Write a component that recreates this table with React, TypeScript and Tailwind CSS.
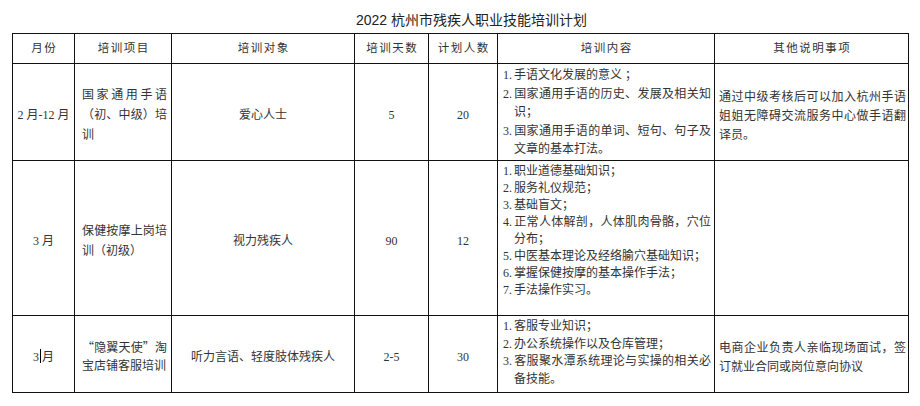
import React from "react";

type Row = {
  month: React.ReactNode;
  project: string;
  projectLeading: string;
  target: string;
  days: string;
  people: string;
  items: string[];
  itemsLeading: string;
  note: string;
  height: string;
};

const rows: Row[] = [
  {
    month: "2 月-12 月",
    project: "国家通用手语（初、中级）培训",
    projectLeading: "leading-[20px]",
    target: "爱心人士",
    days: "5",
    people: "20",
    items: [
      "1.手语文化发展的意义 ；",
      "2.国家通用手语的历史、发展及相关知识；",
      "3.国家通用手语的单词、短句、句子及文章的基本打法。",
    ],
    itemsLeading: "leading-[18.5px]",
    note: "通过中级考核后可以加入杭州手语姐姐无障碍交流服务中心做手语翻译员。",
    height: "h-[97px]",
  },
  {
    month: "3 月",
    project: "保健按摩上岗培训（初级）",
    projectLeading: "leading-[20px]",
    target: "视力残疾人",
    days: "90",
    people: "12",
    items: [
      "1.职业道德基础知识；",
      "2.服务礼仪规范；",
      "3.基础盲文；",
      "4.正常人体解剖，人体肌肉骨骼，穴位分布；",
      "5.中医基本理论及经络腧穴基础知识；",
      "6.掌握保健按摩的基本操作手法；",
      "7.手法操作实习。",
    ],
    itemsLeading: "leading-[17px]",
    note: "",
    height: "h-[155px]",
  },
  {
    month: (
      <>
        3
        <span className="mx-[1px] inline-block h-[14px] w-px bg-black align-[-2px]" />
        月
      </>
    ),
    project: "“隐翼天使”淘宝店铺客服培训",
    projectLeading: "leading-[18px]",
    target: "听力言语、轻度肢体残疾人",
    days: "2-5",
    people: "30",
    items: [
      "1.客服专业知识；",
      "2.办公系统操作以及仓库管理；",
      "3.客服聚水潭系统理论与实操的相关必备技能。",
    ],
    itemsLeading: "leading-[17.5px]",
    note: "电商企业负责人亲临现场面试，签订就业合同或岗位意向协议",
    height: "h-[77px]",
  },
];

const headers = ["月份", "培训项目", "培训对象", "培训天数", "计划人数", "培训内容", "其他说明事项"];

const cell = "border border-[#111] p-0";

function Item({ text }: { text: string }) {
  const dot = text.indexOf(".");
  return (
    <div className="pl-[11px] -indent-[11px] text-justify">
      <span className="mr-[2px]">{text.slice(0, dot + 1)}</span>
      {text.slice(dot + 1)}
    </div>
  );
}

export default function App() {
  return (
    <div
      lang="zh-CN"
      className="h-[406px] w-[920px] bg-white text-[#333] font-['Liberation_Serif','Noto_Sans_CJK_SC',serif]"
    >
      <div className="h-[33px] pl-[23px] pt-[12px] text-center text-[14px] leading-[17px] text-[#222] font-['Liberation_Sans','Noto_Sans_CJK_SC',sans-serif]">
        2022 杭州市残疾人职业技能培训计划
      </div>
      <div className="px-[12px]">
        <table className="w-[896px] table-fixed border-collapse text-[12px]">
          <colgroup>
            <col className="w-[62px]" />
            <col className="w-[97px]" />
            <col className="w-[183px]" />
            <col className="w-[74px]" />
            <col className="w-[69px]" />
            <col className="w-[217px]" />
            <col className="w-[194px]" />
          </colgroup>
          <thead>
            <tr className="h-[30px]">
              {headers.map((h) => (
                <th
                  key={h}
                  className={`${cell} pl-[1.5px] text-center align-middle text-[11.5px] font-normal tracking-[1.5px] text-[#333]`}
                >
                  {h}
                </th>
              ))}
            </tr>
          </thead>
          <tbody>
            {rows.map((r, i) => (
              <tr key={i} className={r.height}>
                <td className={`${cell} pt-[6px] text-center align-middle`}>{r.month}</td>
                <td
                  className={`${cell} pl-[7px] pr-[4px] pt-[4px] text-justify align-middle font-['Noto_Sans_CJK_SC',sans-serif] [font-feature-settings:'fwid'] ${r.projectLeading}`}
                >
                  {r.project}
                </td>
                <td className={`${cell} pt-[6px] text-center align-middle`}>{r.target}</td>
                <td className={`${cell} pt-[6px] text-center align-middle`}>{r.days}</td>
                <td className={`${cell} pt-[6px] text-center align-middle`}>{r.people}</td>
                <td className={`${cell} pl-[5px] pr-[3px] pt-[2px] align-top ${r.itemsLeading}`}>
                  {r.items.map((it) => (
                    <Item key={it} text={it} />
                  ))}
                </td>
                <td className={`${cell} pl-[4px] pr-[2px] pt-[8px] text-justify align-middle leading-[19px]`}>
                  {r.note}
                </td>
              </tr>
            ))}
          </tbody>
        </table>
      </div>
    </div>
  );
}
